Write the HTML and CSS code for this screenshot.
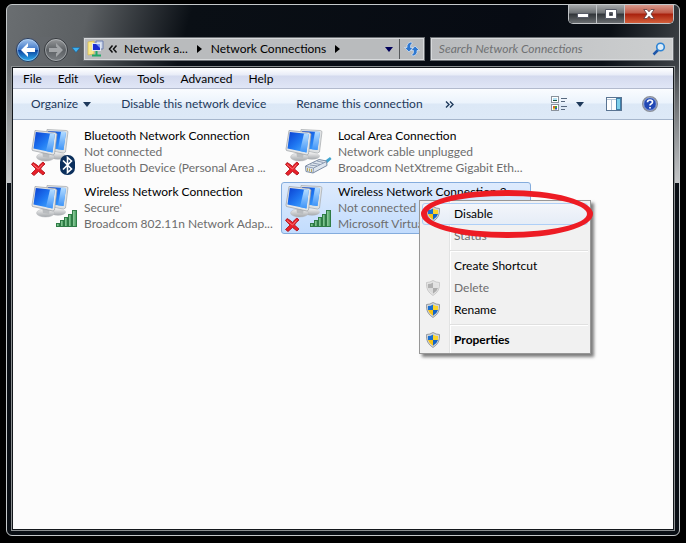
FILE: index.html
```
<!DOCTYPE html>
<html lang="en">
<head>
    <meta charset="UTF-8">
    <meta name="viewport" content="width=device-width, initial-scale=1.0">
    <title>Network Connections</title>
    <link rel="stylesheet" href="styles.css">
</head>

<body>
    <!-- shared icons -->
    <svg class="defs" aria-hidden="true">
        <defs>
            <linearGradient id="screen" x1="0" y1="0" x2="1" y2="1">
                <stop offset="0" stop-color="#0a3fd0"/>
                <stop offset=".5" stop-color="#1f78f2"/>
                <stop offset="1" stop-color="#4fb4ff"/>
            </linearGradient>
            <linearGradient id="shine" x1="0" y1="0" x2="0" y2="1">
                <stop offset="0" stop-color="#b4dcff"/>
                <stop offset="1" stop-color="#3f94f8"/>
            </linearGradient>
            <linearGradient id="metal" x1="0" y1="0" x2="0" y2="1">
                <stop offset="0" stop-color="#f2f2f2"/>
                <stop offset="1" stop-color="#a4a8ac"/>
            </linearGradient>
            <linearGradient id="bars" x1="0" y1="0" x2="1" y2="0">
                <stop offset="0" stop-color="#9fd6ab"/>
                <stop offset="1" stop-color="#3f9a58"/>
            </linearGradient>
            <linearGradient id="orb" x1="0" y1="0" x2="0" y2="1">
                <stop offset="0" stop-color="#a9c8ee"/>
                <stop offset=".48" stop-color="#3f78c8"/>
                <stop offset=".5" stop-color="#0c3f9c"/>
                <stop offset="1" stop-color="#2fb4f4"/>
            </linearGradient>
            <linearGradient id="orb-off" x1="0" y1="0" x2="0" y2="1">
                <stop offset="0" stop-color="#9a9c9e"/>
                <stop offset=".5" stop-color="#5c6064"/>
                <stop offset="1" stop-color="#7c8084"/>
            </linearGradient>
        </defs>

        <symbol id="monitors" viewBox="0 0 48 48">
            <ellipse cx="28" cy="28" rx="8" ry="3.500" fill="url(#metal)"/>
            <path d="M17 1.500L36.500 2.500L38 3.500L35.500 24L33.500 25L16 22Z" fill="#dfe2e4" stroke="#a3a7ab" stroke-width=".7"/>
            <path d="M18 3L36 4L33.500 22L18 20Z" fill="url(#screen)"/>
            <path d="M31 3.700L36 4L33.500 22L28 21.300Z" fill="url(#shine)"/>
            <ellipse cx="15.500" cy="29" rx="9" ry="4" fill="url(#metal)" stroke="#b4b7ba" stroke-width=".5"/>
            <path d="M12 22L20 24L19 30L13 29Z" fill="#b9bcbf"/>
            <path d="M5 2.500L25 4.500L27 6L24.500 26L23 27L2.500 22.500L2 21Z" fill="#e4e6e8" stroke="#9a9ea2" stroke-width=".7"/>
            <path d="M5.800 4L24.800 6L22.500 24.500L3.500 20.500Z" fill="url(#screen)"/>
            <path d="M20 5.500L24.800 6L22.500 24.500L16 23.100Z" fill="url(#shine)"/>
        </symbol>

        <symbol id="cross" viewBox="0 0 48 48">
            <path d="M3 34.500Q7 36.500 8.500 38.500Q10 36 13 34L15 36Q12 38.500 10.500 41L15 45L13 47L8.500 43.500L4 47.500L1.500 45.500L6 41L1.500 36.500Z" fill="#e8202a" stroke="#a80c14" stroke-width=".8"/>
            <path d="M3 36.500L8.500 41L12.500 36.500" fill="none" stroke="#ff8a8a" stroke-width=".8"/>
        </symbol>

        <symbol id="signal" viewBox="0 0 48 48">
            <g fill="url(#bars)" stroke="#2f7c46">
                <rect x="26.500" y="39.500" width="3" height="3"/>
                <rect x="30.500" y="36.500" width="3" height="6"/>
                <rect x="34.500" y="33.500" width="3" height="9"/>
                <rect x="38.500" y="30.500" width="3" height="12"/>
                <rect x="42.500" y="26.500" width="4" height="16"/>
            </g>
        </symbol>

        <symbol id="shield" viewBox="0 0 16 16">
            <path d="M8 .5Q11 2.500 14.500 2.500Q15.500 11 8 15.500Q.5 11 1.500 2.500Q5 2.500 8 .5Z" fill="#d4d8dc" stroke="#858b91" stroke-width=".8"/>
            <path d="M8 2.500V8H3Q2.700 6 3 4Q6 4 8 2.500Z" fill="#1b6fd0"/>
            <path d="M8 2.500V8H13Q13.300 6 13 4Q10 4 8 2.500Z" fill="#fbd52c"/>
            <path d="M8 8V13.700Q4 11.500 3 8Z" fill="#f7c313"/>
            <path d="M8 8V13.700Q12 11.500 13 8Z" fill="#1464c4"/>
        </symbol>
    </svg>

    <div class="window">
        <div class="titlebar">
            <div class="caption">
                <button type="button" aria-label="Minimize">
                    <svg width="12" height="12" viewBox="0 0 12 12"><rect x=".5" y="5.500" width="11" height="4" fill="#fff" stroke="#565a66"/></svg>
                </button>
                <button type="button" aria-label="Maximize">
                    <svg width="12" height="12" viewBox="0 0 12 12"><path d="M.5 1.500H11.500V10.500H.5ZM4.500 4.500V7.500H7.500V4.500Z" fill="#fff" fill-rule="evenodd" stroke="#565a66"/></svg>
                </button>
                <button type="button" class="close" aria-label="Close">
                    <svg width="12" height="12" viewBox="0 0 12 12"><path d="M.8 1.500H4L6 3.800L8 1.500H11.200L8 6L11.200 10.500H8L6 8.200L4 10.500H.8L4 6Z" fill="#fff" stroke="#5a3c40" stroke-width=".8"/></svg>
                </button>
            </div>
        </div>

        <div class="navbar">
            <div class="travel">
                <div class="orbs">
                    <button type="button" aria-label="Back">
                        <svg width="26" height="26" viewBox="0 0 26 26">
                            <circle cx="13" cy="13" r="11.500" fill="url(#orb)" stroke="#2a3c5c"/>
                            <circle cx="13" cy="13" r="10.500" fill="none" stroke="#b4d4f4" stroke-opacity=".6"/>
                            <path d="M13 6L6 13L13 20V16.500L11.500 15H20V11H11.500L13 9.500Z" fill="#fff"/>
                        </svg>
                    </button>
                    <button type="button" aria-label="Forward">
                        <svg width="26" height="26" viewBox="0 0 26 26">
                            <circle cx="13" cy="13" r="11.500" fill="url(#orb-off)" stroke="#35393d"/>
                            <circle cx="13" cy="13" r="10.500" fill="none" stroke="#c0c4c8" stroke-opacity=".6"/>
                            <path d="M13 6L20 13L13 20V16.500L14.500 15H6V11H14.500L13 9.500Z" fill="#a2a5a8"/>
                        </svg>
                    </button>
                </div>
                <button type="button" aria-label="Recent pages">
                    <svg width="8" height="6" viewBox="0 0 8 6"><path d="M0 .5H8L4 5.500Z" fill="#3cb0f0" stroke="#175a92" stroke-width=".5"/></svg>
                </button>
            </div>

            <nav class="address" aria-label="Address">
                <svg class="place" width="18" height="18" viewBox="0 0 18 18">
                    <path d="M1 2L7 1V14L1 15Z" fill="#f8e88c" stroke="#d4b848" stroke-width=".7"/>
                    <path d="M9 1H16V9H9Z" fill="#cdd8ec" stroke="#6d7eb0"/>
                    <rect x="5.500" y="3.500" width="8" height="7" fill="#1b2fd0" stroke="#dfe6f2"/>
                    <path d="M9 4L13 8V4Z" fill="#7d9cf4"/>
                    <path d="M9.500 11V15M5 15.500H14" stroke="#23a866" stroke-width="2"/>
                </svg>
                <button type="button" class="up" aria-label="Parent folders">
                    <svg width="10" height="8" viewBox="0 0 10 8"><path d="M4.500 .5L1.500 4L4.500 7.500M8.500 .5L5.500 4L8.500 7.500" fill="none" stroke="#111" stroke-width="1.500"/></svg>
                </button>
                <button type="button">Network a...</button>
                <svg class="arrow" width="5" height="8" viewBox="0 0 5 8"><path d="M0 0L5 4L0 8Z" fill="#000"/></svg>
                <button type="button">Network Connections</button>
                <svg class="arrow" width="5" height="8" viewBox="0 0 5 8"><path d="M0 0L5 4L0 8Z" fill="#000"/></svg>
                <button type="button" class="history" aria-label="Previous locations">
                    <svg width="8" height="5" viewBox="0 0 8 5"><path d="M0 0H8L4 5Z" fill="#00005a"/></svg>
                </button>
                <button type="button" class="refresh" aria-label="Refresh">
                    <svg width="16" height="16" viewBox="0 0 16 16">
                        <path d="M7 1Q2.500 2 3 6.500H.5L5 11L9 6.500H6.500Q6 3.500 8.500 2Z" fill="#2f78d0" stroke="#eaf2fc" stroke-width=".6"/>
                        <path d="M9 15Q13.500 14 13 9.500H15.500L11 5L7 9.500H9.500Q10 12.500 7.500 14Z" fill="#2f78d0" stroke="#eaf2fc" stroke-width=".6"/>
                    </svg>
                </button>
            </nav>

            <div class="search">
                <input type="text" placeholder="Search Network Connections" aria-label="Search Network Connections">
                <svg width="14" height="14" viewBox="0 0 14 14">
                    <path d="M6 8L1.500 12.500" stroke="#1e56a8" stroke-width="2.500"/>
                    <circle cx="8.500" cy="5" r="3.800" fill="#dcecf8" stroke="#2e84d4" stroke-width="1.600"/>
                </svg>
            </div>
        </div>

        <div class="client">
            <div class="menubar">
                <button type="button">File</button>
                <button type="button">Edit</button>
                <button type="button">View</button>
                <button type="button">Tools</button>
                <button type="button">Advanced</button>
                <button type="button">Help</button>
            </div>

            <div class="toolbar">
                <button type="button">Organize <svg width="8" height="5" viewBox="0 0 8 5"><path d="M0 0H8L4 5Z" fill="#1e395b"/></svg></button>
                <button type="button">Disable this network device</button>
                <button type="button">Rename this connection</button>
                <button type="button" class="more" aria-label="More commands">
                    <svg width="9" height="7" viewBox="0 0 9 7"><path d="M1 .5L4 3.500L1 6.500M5 .5L8 3.500L5 6.500" fill="none" stroke="#1e395b" stroke-width="1.400"/></svg>
                </button>
                <div class="views">
                    <button type="button" aria-label="Change your view">
                        <svg width="16" height="16" viewBox="0 0 16 16">
                            <rect x=".5" y=".5" width="7" height="6" fill="#fff" stroke="#8a929c"/>
                            <path d="M2 2.500H6V3.500H2Z" fill="#6cc4e8"/>
                            <path d="M2 4H6V5H2Z" fill="#14503c"/>
                            <rect x=".5" y="8.500" width="7" height="6" fill="#fff" stroke="#8a929c"/>
                            <path d="M2 10H4V12H2Z" fill="#d8622c"/>
                            <path d="M4 10H6V12H4Z" fill="#3ca43c"/>
                            <path d="M2 12H4V13.500H2Z" fill="#e0c020"/>
                            <path d="M4 12H6V13.500H4Z" fill="#2c4cc0"/>
                            <path d="M10 2.500H16M10 5.500H14M10 10.500H16M10 13.500H14" stroke="#56687e"/>
                        </svg>
                    </button>
                    <button type="button" aria-label="More options">
                        <svg width="8" height="5" viewBox="0 0 8 5"><path d="M0 0H8L4 5Z" fill="#1e395b"/></svg>
                    </button>
                </div>
                <button type="button" aria-label="Show the preview pane">
                    <svg width="16" height="14" viewBox="0 0 16 14">
                        <rect x=".5" y=".5" width="15" height="13" fill="#fff" stroke="#5a7492"/>
                        <path d="M1 2.500H10M5.500 3V13" stroke="#b4c4d6"/>
                        <rect x="10.500" y="1.500" width="4" height="11" fill="#7fd0ea" stroke="#3e7ea8"/>
                    </svg>
                </button>
                <button type="button" class="help" aria-label="Get help">
                    <svg width="16" height="16" viewBox="0 0 16 16">
                        <circle cx="8" cy="8" r="7.300" fill="#2148b4" stroke="#8c9098" stroke-width="1.400"/>
                        <circle cx="8" cy="8" r="6.300" fill="none" stroke="#d8e0f0" stroke-width=".6"/>
                        <path d="M5.500 6.200Q5.600 4 8 4Q10.500 4 10.500 6Q10.500 7.300 9 8Q8 8.500 8 9.500M8 11V12.600" fill="none" stroke="#fff" stroke-width="1.700"/>
                    </svg>
                </button>
            </div>

            <main class="pane">
                <ul class="connections">
                    <li class="connection">
                        <svg width="48" height="48" viewBox="0 0 48 48">
                            <use href="#monitors"/>
                            <use href="#cross"/>
                            <rect x="30" y="27" width="15" height="20" rx="7" fill="#0b2f5c"/>
                            <path d="M33 32.500L41.500 41L37.500 44.500V29.500L41.500 33L33 41.500" fill="none" stroke="#fff" stroke-width="1.600"/>
                        </svg>
                        <div class="info">
                            <span class="name">Bluetooth Network Connection</span>
                            <span>Not connected</span>
                            <span>Bluetooth Device (Personal Area ...</span>
                        </div>
                    </li>
                    <li class="connection">
                        <svg width="48" height="48" viewBox="0 0 48 48">
                            <use href="#monitors"/>
                            <use href="#cross"/>
                            <path d="M38 35L46 29L47.500 31L40 38Z" fill="#3ea4d0"/>
                            <path d="M21.500 38L35 31.500L42.500 33L43 37.500L29 45L22 43.500Z" fill="#dde5ee" stroke="#7c8ca4"/>
                            <path d="M22 38.500L29.500 40L42.500 33.500M29.500 40L29 45M26 37L33 38M29 35L36 36.500M33 33L39.500 34.500" fill="none" stroke="#7c8ca4" stroke-width=".8"/>
                            <path d="M23.500 40V43M25.500 40.500V43.500M27.500 41V44" stroke="#b49a38" stroke-width=".8"/>
                        </svg>
                        <div class="info">
                            <span class="name">Local Area Connection</span>
                            <span>Network cable unplugged</span>
                            <span>Broadcom NetXtreme Gigabit Eth...</span>
                        </div>
                    </li>
                    <li class="connection">
                        <svg width="48" height="48" viewBox="0 0 48 48">
                            <use href="#monitors"/>
                            <use href="#signal"/>
                        </svg>
                        <div class="info">
                            <span class="name">Wireless Network Connection</span>
                            <span>Secure'</span>
                            <span>Broadcom 802.11n Network Adap...</span>
                        </div>
                    </li>
                    <li class="connection selected">
                        <svg width="48" height="48" viewBox="0 0 48 48">
                            <use href="#monitors"/>
                            <use href="#cross"/>
                            <use href="#signal"/>
                        </svg>
                        <div class="info">
                            <span class="name">Wireless Network Connection 2</span>
                            <span>Not connected</span>
                            <span>Microsoft Virtua</span>
                        </div>
                    </li>
                </ul>

                <div class="context-menu">
                    <button type="button" class="hover"><svg width="16" height="16"><use href="#shield"/></svg>Disable</button>
                    <button type="button" disabled><i></i>Status</button>
                    <hr>
                    <button type="button"><i></i>Create Shortcut</button>
                    <button type="button" disabled><svg width="16" height="16"><use href="#shield"/></svg>Delete</button>
                    <button type="button"><svg width="16" height="16"><use href="#shield"/></svg>Rename</button>
                    <hr>
                    <button type="button" class="default"><svg width="16" height="16"><use href="#shield"/></svg>Properties</button>
                    <div class="marker"></div>
                </div>
            </main>
        </div>
    </div>
</body>
</html>
```
FILE: styles.css
```
* {
    box-sizing: border-box;
}

body {
    margin: 0;
    padding: 4px 6px 7px;
    background: #000;
    color: #000;
    font-family: Lato, 'Open Sans', sans-serif;
    font-size: 12px;
    line-height: 16px;
}

button {
    display: flex;
    align-items: center;
    padding: 0;
    border: 0;
    background: none;
    color: inherit;
    font: inherit;
    white-space: nowrap;
}

svg {
    display: block;
    flex: none;
}

.defs {
    position: absolute;
    width: 0;
    height: 0;
}

/* window frame */

.window {
    display: flex;
    flex-direction: column;
    min-height: calc(100vh - 11px);
    padding: 0 5px 5px;
    border: 1px solid #c4c8ca;
    border-radius: 6px;
    background:
        linear-gradient(#0a0f15, #0a0f15) 0 178px no-repeat,
        linear-gradient(to bottom, transparent 60px, #c4c6c8 178px) left top / 6px 178px no-repeat,
        linear-gradient(to bottom, transparent 60px, #c4c6c8 178px) right top / 6px 178px no-repeat,
        linear-gradient(105deg, #6a6e71 0, #5c6063 80px, #0a0f15 180px, #070b13 500px, #0a0f15 75%, #5c6063 90%, #66696c 100%);
}

.titlebar {
    display: flex;
    justify-content: flex-end;
    height: 32px;
}

.caption {
    display: flex;
    height: 19px;
    border: 1px solid #c0c3c6;
    border-top: 0;
    border-radius: 0 0 5px 5px;
    overflow: hidden;
}

.caption button {
    justify-content: center;
    width: 28px;
    border-right: 1px solid #c0c3c6;
    background: linear-gradient(#a5a8aa, #6c7073 45%, #303438 50%, #6a6e71);
}

.caption .close {
    width: 48px;
    border-right: 0;
    background: linear-gradient(#d8998c, #c05a48 45%, #a8200c 50%, #d4603c);
}

.navbar {
    display: grid;
    grid-template-columns: 66px 7fr 5fr;
    gap: 5px;
    height: 26px;
    margin-bottom: 4px;
}

.travel {
    display: flex;
    align-items: center;
    gap: 3px;
    padding-left: 3px;
}

.orbs {
    display: flex;
    gap: 2px;
    border-radius: 13px;
    background: rgba(100, 104, 108, 0.6);
}

.address,
.search {
    display: flex;
    align-items: center;
    height: 24px;
    border: 1px solid #6c7074;
    outline: 1px solid #d8dadc;
    outline-offset: -2px;
    background: #b9bbbd;
}

.address {
    padding-left: 3px;
}

.up {
    margin: 0 6px 0 3px;
}

.arrow {
    margin: 0 9px;
}

.history {
    margin-left: auto;
    margin-right: 6px;
}

.refresh {
    align-self: stretch;
    padding: 0 4px;
    border-left: 1px solid #55585b;
}

.search {
    padding: 0 7px 0 8px;
    background: linear-gradient(to right, #b9bbbd, #cdcfd0);
}

.search input {
    flex: 1;
    min-width: 0;
    padding: 0;
    border: 0;
    background: none;
    font: inherit;
}

.search input::placeholder {
    color: #6f7173;
    font-style: italic;
}

.client {
    display: flex;
    flex: 1;
    flex-direction: column;
    border: 1px solid #14181c;
    outline: 1px solid #8c9092;
    background: #fcfcfc;
}

/* command bars */

.menubar {
    display: flex;
    gap: 16px;
    height: 21px;
    padding: 2px 10px 0 10px;
    border-bottom: 1px solid #b2bacd;
    background: linear-gradient(#fff, #e8ecf7 7px, #d4daee 8px, #e0e6f6);
}

.toolbar {
    display: flex;
    align-items: center;
    gap: 30px;
    height: 31px;
    padding: 0 15px 0 18px;
    border-bottom: 1px solid #a6b6cc;
    background: linear-gradient(#fafcff, #ebf3fc 14px, #dce8f6 15px, #dde9f7);
    color: #1e395b;
}

.toolbar button {
    gap: 5px;
}

.toolbar .more {
    margin-left: -8px;
}

.views {
    display: flex;
    gap: 9px;
    margin-left: auto;
    margin-right: -8px;
}

.toolbar .help {
    margin-left: -10px;
}

/* file pane */

.pane {
    position: relative;
    flex: 1;
}

.connections {
    display: grid;
    grid-template-columns: repeat(auto-fill, 250px);
    gap: 4px;
    margin: 0;
    padding: 6px 14px;
    list-style: none;
}

.connection {
    display: flex;
    gap: 6px;
    padding: 1px 2px;
    border: 1px solid transparent;
    border-radius: 3px;
}

.connection.selected {
    border-color: #84acdd;
    background: linear-gradient(#deebfd, #c2dcfd);
}

.info {
    display: flex;
    flex-direction: column;
    color: #6d6d6d;
    white-space: nowrap;
}

.info .name {
    color: #000;
}

/* context menu */

.context-menu {
    position: absolute;
    left: 406px;
    top: 80px;
    width: 172px;
    padding: 2px;
    border: 1px solid #979797;
    background: linear-gradient(to right, #e2e3e3 1px, #fff 1px, #fff 2px, transparent 2px) 29px 0 no-repeat #f1f1f1;
    box-shadow: 3px 3px 3px rgba(0, 0, 0, 0.5);
}

.context-menu button {
    gap: 13px;
    width: 100%;
    height: 22px;
    padding-left: 2px;
    border: 1px solid transparent;
    border-radius: 3px;
}

.context-menu i {
    width: 16px;
}

.context-menu button:disabled {
    color: #6d6d6d;
}

.context-menu button:disabled svg {
    filter: grayscale(1);
    opacity: 0.45;
}

.context-menu .hover {
    border-color: #aecff7;
    background: linear-gradient(rgba(243, 246, 251, 0.9), rgba(228, 236, 247, 0.9));
}

.context-menu .default {
    font-weight: bold;
}

.context-menu hr {
    height: 2px;
    margin: 3px 0 3px 28px;
    border: 0;
    border-top: 1px solid #e0e0e0;
    border-bottom: 1px solid #fff;
}

.marker {
    position: absolute;
    left: 1px;
    top: -11px;
    width: 172px;
    height: 48px;
    border: 6px solid #ed1c24;
    border-radius: 50%;
    pointer-events: none;
}
```
